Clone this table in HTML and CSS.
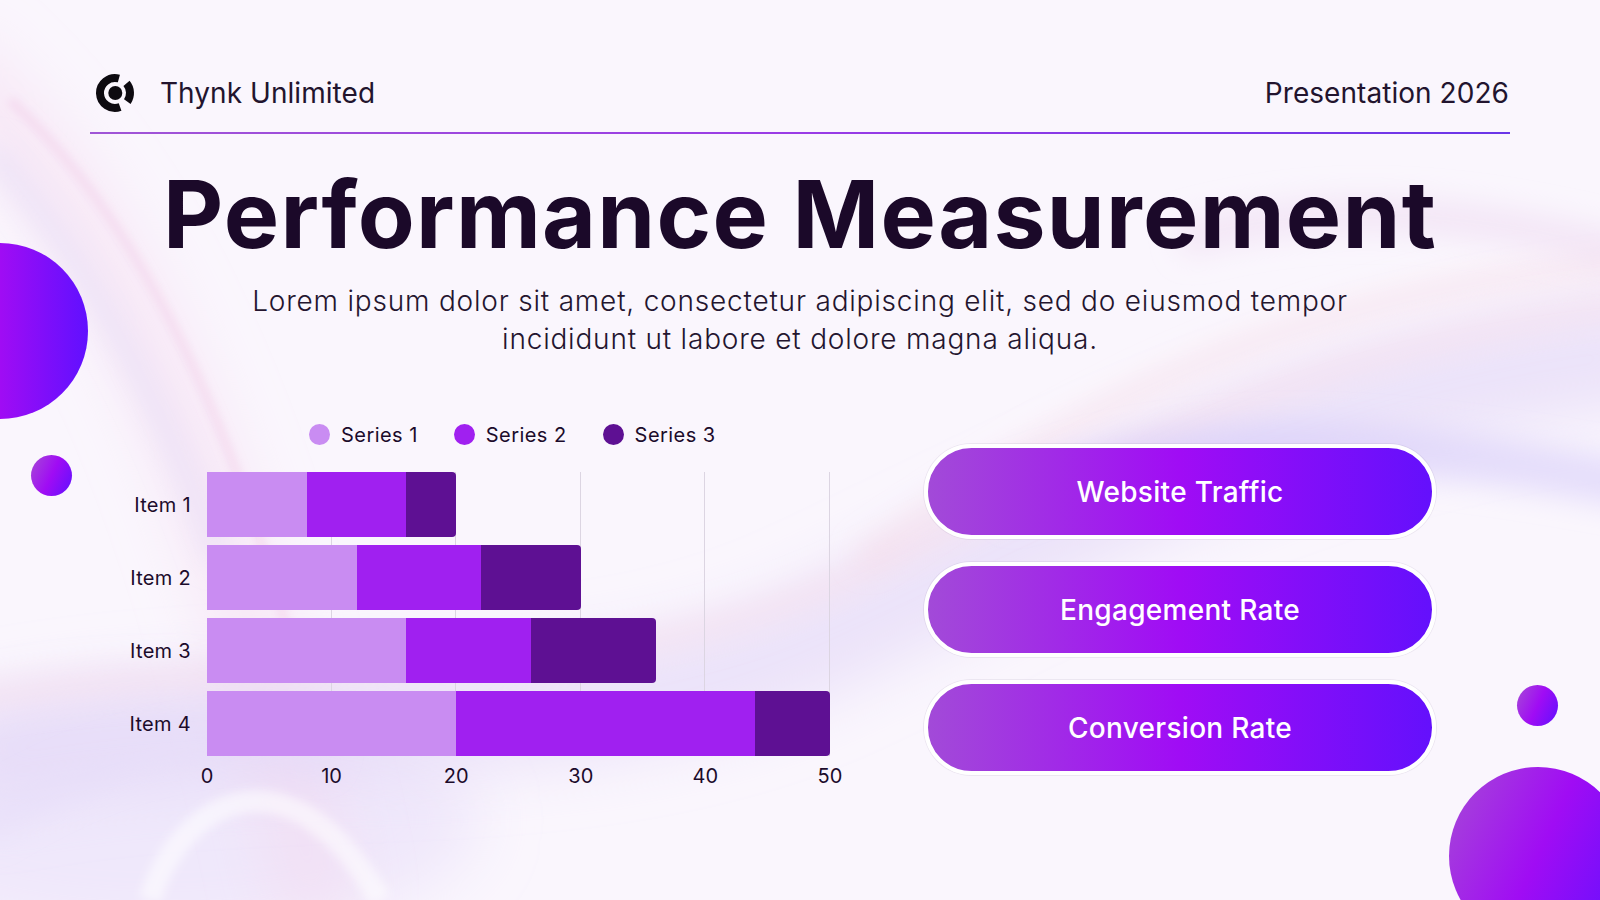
FILE: index.html
```html
<!DOCTYPE html>
<html lang="en">
<head>
<meta charset="utf-8">
<title>Performance Measurement</title>
<link rel="stylesheet" href="styles.css">
</head>
<body>
<div class="slide">
  <svg class="bg" viewBox="0 0 1600 900" preserveAspectRatio="none" aria-hidden="true">
    <defs>
      <filter id="b1" filterUnits="userSpaceOnUse" x="-300" y="-300" width="2200" height="1500"><feGaussianBlur stdDeviation="14"/></filter>
      <filter id="b2" filterUnits="userSpaceOnUse" x="-300" y="-300" width="2200" height="1500"><feGaussianBlur stdDeviation="30"/></filter>
      <filter id="b3" filterUnits="userSpaceOnUse" x="-300" y="-300" width="2200" height="1500"><feGaussianBlur stdDeviation="5"/></filter>
    </defs>
    <!-- bottom-left lavender haze -->
    <ellipse cx="160" cy="820" rx="320" ry="120" fill="rgba(226,216,248,0.45)" filter="url(#b2)"/>
    <!-- left silky streaks -->
    <path d="M -60 60 C 110 200, 230 460, 320 920" fill="none" stroke="rgba(244,214,238,0.45)" stroke-width="80" filter="url(#b2)"/>
    <path d="M 10 100 C 140 220, 230 420, 290 640" fill="none" stroke="rgba(240,196,226,0.45)" stroke-width="8" filter="url(#b3)"/>
    <path d="M -10 150 C 90 260, 170 420, 220 560" fill="none" stroke="rgba(225,215,245,0.5)" stroke-width="22" filter="url(#b1)"/>
    <!-- big sweeping wave -->
    <path d="M -40 760 C 260 690, 560 760, 820 640 S 1280 390, 1660 350" fill="none" stroke="rgba(224,212,246,0.55)" stroke-width="110" filter="url(#b2)"/>
    <path d="M -40 700 C 250 650, 560 700, 820 590 S 1260 350, 1660 300" fill="none" stroke="rgba(246,220,236,0.5)" stroke-width="26" filter="url(#b1)"/>
    <path d="M 860 560 C 1050 430, 1250 290, 1660 260" fill="none" stroke="rgba(246,214,226,0.45)" stroke-width="22" filter="url(#b1)"/>
    <!-- right lavender band -->
    <path d="M 1000 500 C 1200 420, 1400 440, 1660 490" fill="none" stroke="rgba(214,202,250,0.55)" stroke-width="48" filter="url(#b1)"/>
    <path d="M 1180 240 C 1320 200, 1460 210, 1620 250" fill="none" stroke="rgba(238,216,240,0.5)" stroke-width="36" filter="url(#b1)"/>
    <!-- bottom-left soft arcs -->
    <path d="M 150 900 C 180 800, 290 740, 380 900" fill="none" stroke="rgba(255,255,255,0.55)" stroke-width="22" filter="url(#b3)"/>
    <path d="M -20 830 C 120 740, 260 720, 330 760" fill="none" stroke="rgba(232,222,250,0.55)" stroke-width="30" filter="url(#b1)"/>
  </svg>

  <div class="dot dot-big-left"></div>
  <div class="dot dot-small-left"></div>
  <div class="dot dot-small-right"></div>
  <div class="dot dot-big-right"></div>

  <div class="content">
    <header class="header">
      <div class="brand">
        <svg class="logo" viewBox="0 0 40 40" width="40" height="40" aria-hidden="true">
          <path d="M 23.9 5.5 A 15 15 0 1 0 25.1 34.1" fill="none" stroke="#0d0a10" stroke-width="8"/>
          <path d="M 31.5 10.4 A 15 15 0 0 1 32.3 28.6" fill="none" stroke="#0d0a10" stroke-width="8"/>
          <circle cx="20.3" cy="20" r="7" fill="#0d0a10"/>
        </svg>
        <span class="brand-name">Thynk Unlimited</span>
      </div>
      <span class="header-right">Presentation 2026</span>
    </header>
    <div class="rule"></div>

    <h1 class="title">Performance Measurement</h1>
    <p class="subtitle">Lorem ipsum dolor sit amet, consectetur adipiscing elit, sed do eiusmod tempor<br>incididunt ut labore et dolore magna aliqua.</p>

    <section class="main">
      <div class="chart">
        <div class="legend">
          <span class="legend-item"><i class="swatch s1"></i>Series 1</span>
          <span class="legend-item"><i class="swatch s2"></i>Series 2</span>
          <span class="legend-item"><i class="swatch s3"></i>Series 3</span>
        </div>
        <div class="plot-wrap">
          <div class="labels">
            <span>Item 1</span>
            <span>Item 2</span>
            <span>Item 3</span>
            <span>Item 4</span>
          </div>
          <div class="plot">
            <div class="bar">
              <span class="seg s1" style="width:99.7px"></span>
              <span class="seg s2" style="width:99.7px"></span>
              <span class="seg s3" style="width:49.8px"></span>
            </div>
            <div class="bar">
              <span class="seg s1" style="width:149.5px"></span>
              <span class="seg s2" style="width:124.6px"></span>
              <span class="seg s3" style="width:99.7px"></span>
            </div>
            <div class="bar">
              <span class="seg s1" style="width:199.4px"></span>
              <span class="seg s2" style="width:124.6px"></span>
              <span class="seg s3" style="width:124.6px"></span>
            </div>
            <div class="bar">
              <span class="seg s1" style="width:249.2px"></span>
              <span class="seg s2" style="width:299.0px"></span>
              <span class="seg s3" style="width:74.8px"></span>
            </div>
          </div>
        </div>
        <div class="axis">
          <span>0</span><span>10</span><span>20</span><span>30</span><span>40</span><span>50</span>
        </div>
      </div>

      <div class="pills">
        <div class="pill">Website Traffic</div>
        <div class="pill">Engagement Rate</div>
        <div class="pill">Conversion Rate</div>
      </div>
    </section>
  </div>
</div>
</body>
</html>
```

FILE: styles.css
```css
* { box-sizing: border-box; margin: 0; padding: 0; }

body {
  margin: 0;
  width: 1600px;
  height: 900px;
  overflow: hidden;
  font-family: Inter, "Noto Sans", sans-serif;
  color: #1c0b2b;
}

.slide {
  position: relative;
  width: 1600px;
  height: 900px;
  overflow: hidden;
  background: #faf6fd;
}

.bg {
  position: absolute;
  left: 0;
  top: 0;
  width: 1600px;
  height: 900px;
}

.dot {
  position: absolute;
  border-radius: 50%;
  background: linear-gradient(115deg, #a64ad6 0%, #a00cf4 50%, #6010ff 100%);
}
.dot-big-left {
  left: -88px; top: 243px; width: 176px; height: 176px;
  background: linear-gradient(90deg, #a64ad6 0%, #a00cf4 50%, #6010ff 100%);
}
.dot-small-left { left: 31px; top: 455px; width: 41px; height: 41px; }
.dot-small-right { left: 1517px; top: 685px; width: 41px; height: 41px; }
.dot-big-right { left: 1449px; top: 767px; width: 178px; height: 178px; }

.content {
  position: relative;
  padding: 0 90px;
}

.header {
  display: flex;
  justify-content: space-between;
  align-items: center;
  height: 40px;
  margin-top: 73px;
}

.brand {
  display: flex;
  align-items: center;
  gap: 25px;
  margin-left: 5px;
}

.logo { display: block; }

.brand-name,
.header-right {
  font-size: 28px;
  font-weight: 400;
  color: #22142e;
  letter-spacing: 0.05px;
}

.header-right { margin-right: 1px; }

.rule {
  height: 2px;
  margin-top: 19px;
  background: linear-gradient(90deg, #a055d6 0%, #9a3be6 50%, #6a35e8 100%);
}

.title {
  margin-top: 30px;
  font-size: 93px;
  line-height: 100px;
  font-weight: 700;
  text-align: center;
  color: #1b0929;
  letter-spacing: 1.3px;
}

.subtitle {
  margin-top: 18px;
  font-size: 28px;
  line-height: 38px;
  font-weight: 300;
  text-align: center;
  color: #24152f;
  letter-spacing: 0.8px;
}

.main {
  display: flex;
  align-items: flex-start;
  margin-top: 66px;
}

.chart {
  display: flex;
  flex-direction: column;
  width: 740px;
}

.legend {
  display: flex;
  align-items: center;
  gap: 36px;
  height: 21px;
  margin-left: 219px;
}

.legend-item {
  display: flex;
  align-items: center;
  gap: 11px;
  font-size: 20px;
  letter-spacing: 0.45px;
  color: #1c0b2b;
}

.swatch {
  display: block;
  width: 21px;
  height: 21px;
  border-radius: 50%;
}

.s1 { background: #c98cf2; }
.s2 { background: #a020f0; }
.s3 { background: #5e1093; }

.plot-wrap {
  display: grid;
  grid-template-columns: 101px 623px;
  column-gap: 16px;
  margin-top: 27px;
}

.labels {
  display: flex;
  flex-direction: column;
  gap: 8px;
}

.labels span {
  display: flex;
  align-items: center;
  justify-content: flex-end;
  height: 65px;
  font-size: 20px;
  letter-spacing: 0.3px;
  color: #1c0b2b;
}

.plot {
  display: flex;
  flex-direction: column;
  gap: 8px;
  background: repeating-linear-gradient(90deg,
    transparent 0, transparent 123.6px,
    #dcd5e2 123.6px, #dcd5e2 124.6px);
}

.bar {
  display: flex;
  height: 65px;
}

.seg { display: block; height: 100%; }
.bar .seg:last-child { border-radius: 0 4px 4px 0; }

.axis {
  display: flex;
  justify-content: space-between;
  width: 663px;
  margin-left: 97px;
  margin-top: 8px;
}

.axis span {
  width: 40px;
  text-align: center;
  font-size: 20px;
  line-height: 24px;
  color: #1c0b2b;
}

.pills {
  display: flex;
  flex-direction: column;
  gap: 23px;
  margin-left: 94px;
  margin-top: 20px;
}

.pill {
  display: flex;
  align-items: center;
  justify-content: center;
  width: 512px;
  height: 95px;
  border: 4px solid #ffffff;
  border-radius: 48px;
  background: linear-gradient(90deg, #a24ad8 0%, #a00cf5 50%, #6410fc 100%);
  box-shadow: 0 0 0 1px rgba(120, 100, 140, 0.10);
  color: #ffffff;
  font-size: 28px;
  font-weight: 500;
  letter-spacing: 0.3px;
}
```
